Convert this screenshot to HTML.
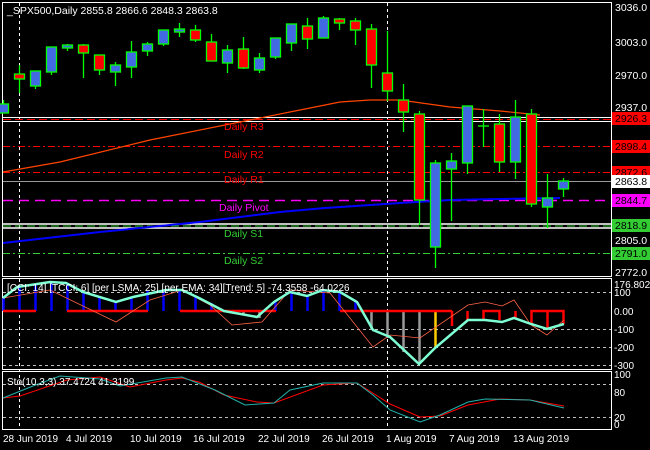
<!DOCTYPE html>
<html><head><style>
body{margin:0;background:#000;}
svg{display:block;font-family:"Liberation Sans",sans-serif;}
</style></head><body>
<svg width="650" height="450" viewBox="0 0 650 450" xmlns="http://www.w3.org/2000/svg">
<rect width="650" height="450" fill="#000"/>
<!-- pane borders -->
<g stroke="#fff" stroke-width="1" fill="none">
<rect x="2.5" y="2.5" width="609" height="274"/>
<rect x="2.5" y="278.5" width="609" height="91"/>
<rect x="2.5" y="371.5" width="609" height="58"/>
</g>
<!-- vertical dashed -->
<g stroke="#fff" stroke-dasharray="3,3">
<line x1="19.5" y1="3" x2="19.5" y2="430"/>
<line x1="387.5" y1="3" x2="387.5" y2="430"/>
</g>
<!-- levels -->
<line x1="3" y1="117.5" x2="611" y2="117.5" stroke="#fff"/>
<line x1="3" y1="121.5" x2="611" y2="121.5" stroke="#fff"/>
<line x1="3" y1="119.5" x2="611" y2="119.5" stroke="#f00" stroke-dasharray="8,4"/>
<line x1="3" y1="146.5" x2="611" y2="146.5" stroke="#f00" stroke-dasharray="7,3,2,3"/>
<line x1="3" y1="172.5" x2="611" y2="172.5" stroke="#f00" stroke-dasharray="7,3,2,3"/>
<line x1="3" y1="181.5" x2="611" y2="181.5" stroke="#999"/>
<line x1="3" y1="200.5" x2="611" y2="200.5" stroke="#f0f" stroke-width="1.5" stroke-dasharray="10,6"/>
<line x1="3" y1="224" x2="611" y2="224" stroke="#fff" stroke-width="1.5"/>
<line x1="3" y1="228" x2="611" y2="228" stroke="#fff" stroke-width="1.5"/>
<line x1="3" y1="226" x2="611" y2="226" stroke="#3c3" stroke-dasharray="8,4"/>
<line x1="3" y1="253.5" x2="611" y2="253.5" stroke="#3c3" stroke-dasharray="7,3,2,3"/>
<!-- MAs -->
<polyline fill="none" stroke="#ff4500" stroke-width="1.2" points="3,172 60,162 150,140 230,124 300,110 340,102 370,100 400,100 450,107 500,111 540,115"/>
<polyline fill="none" stroke="#00f" stroke-width="2" points="3,243 100,232 200,222 280,212 325,208 400,203 450,200 500,199 560,198"/>
<!-- level labels -->
<g font-size="10.5">
<text x="224" y="130" fill="#f00">Daily R3</text>
<text x="224" y="158" fill="#f00">Daily R2</text>
<text x="224" y="183" fill="#f00">Daily R1</text>
<text x="219" y="211" fill="#f0f">Daily Pivot</text>
<text x="224" y="237" fill="#3c3">Daily S1</text>
<text x="224" y="264" fill="#3c3">Daily S2</text>
</g>
<!-- candles -->
<g stroke="#0f0" stroke-width="1.3">
<line x1="3.5" y1="100" x2="3.5" y2="113"/><rect x="-1.5" y="104" width="10" height="9" fill="#4169e1"/>
<line x1="19.5" y1="65" x2="19.5" y2="93"/><rect x="14.5" y="74" width="10" height="5" fill="#f00"/>
<line x1="35.5" y1="71" x2="35.5" y2="89"/><rect x="30.5" y="71" width="10" height="15" fill="#4169e1"/>
<line x1="51.5" y1="47" x2="51.5" y2="75"/><rect x="46.5" y="47" width="10" height="25" fill="#4169e1"/>
<line x1="67.5" y1="44" x2="67.5" y2="51"/><rect x="62.5" y="45" width="10" height="3" fill="#4169e1"/>
<line x1="83.5" y1="44" x2="83.5" y2="78"/><rect x="78.5" y="45" width="10" height="8" fill="#f00"/>
<line x1="99.5" y1="55" x2="99.5" y2="75"/><rect x="94.5" y="55" width="10" height="15" fill="#f00"/>
<line x1="115.5" y1="62" x2="115.5" y2="86"/><rect x="110.5" y="65" width="10" height="7" fill="#4169e1"/>
<line x1="131.5" y1="41" x2="131.5" y2="78"/><rect x="126.5" y="52" width="10" height="15" fill="#4169e1"/>
<line x1="147.5" y1="42" x2="147.5" y2="56"/><rect x="142.5" y="44" width="10" height="7" fill="#4169e1"/>
<line x1="163.5" y1="30" x2="163.5" y2="46"/><rect x="158.5" y="30" width="10" height="14" fill="#4169e1"/>
<line x1="179.5" y1="23" x2="179.5" y2="37"/><rect x="174.5" y="29" width="10" height="3" fill="#4169e1"/>
<line x1="195.5" y1="25" x2="195.5" y2="42"/><rect x="190.5" y="30" width="10" height="10" fill="#f00"/>
<line x1="211.5" y1="34" x2="211.5" y2="61"/><rect x="206.5" y="42" width="10" height="19" fill="#f00"/>
<line x1="227.5" y1="45" x2="227.5" y2="73"/><rect x="222.5" y="50" width="10" height="13" fill="#4169e1"/>
<line x1="243.5" y1="37" x2="243.5" y2="69"/><rect x="238.5" y="49" width="10" height="19" fill="#f00"/>
<line x1="259.5" y1="53" x2="259.5" y2="73"/><rect x="254.5" y="58" width="10" height="12" fill="#4169e1"/>
<line x1="275.5" y1="38" x2="275.5" y2="59"/><rect x="270.5" y="38" width="10" height="19" fill="#4169e1"/>
<line x1="291.5" y1="24" x2="291.5" y2="51"/><rect x="286.5" y="24" width="10" height="19" fill="#4169e1"/>
<line x1="307.5" y1="18" x2="307.5" y2="49"/><rect x="302.5" y="26" width="10" height="13" fill="#f00"/>
<line x1="323.5" y1="16" x2="323.5" y2="38"/><rect x="318.5" y="18" width="10" height="20" fill="#4169e1"/>
<line x1="339.5" y1="18" x2="339.5" y2="30"/><rect x="334.5" y="19" width="10" height="4" fill="#f00"/>
<line x1="355.5" y1="18" x2="355.5" y2="45"/><rect x="350.5" y="21" width="10" height="9" fill="#f00"/>
<line x1="371.5" y1="24" x2="371.5" y2="88"/><rect x="366.5" y="29" width="10" height="36" fill="#f00"/>
<line x1="387.5" y1="31" x2="387.5" y2="101"/><rect x="382.5" y="73" width="10" height="18" fill="#f00"/>
<line x1="403.5" y1="84" x2="403.5" y2="132"/><rect x="398.5" y="100" width="10" height="12" fill="#f00"/>
<line x1="419.5" y1="111" x2="419.5" y2="225"/><rect x="414.5" y="114" width="10" height="86" fill="#f00"/>
<line x1="435.5" y1="160" x2="435.5" y2="268"/><rect x="430.5" y="163" width="10" height="84" fill="#4169e1"/>
<line x1="451.5" y1="153" x2="451.5" y2="221"/><rect x="446.5" y="161" width="10" height="8" fill="#4169e1"/>
<line x1="467.5" y1="106" x2="467.5" y2="174"/><rect x="462.5" y="106" width="10" height="57" fill="#4169e1"/>
<line x1="483.5" y1="109" x2="483.5" y2="147"/><line x1="478" y1="126" x2="489" y2="126"/>
<line x1="499.5" y1="114" x2="499.5" y2="172"/><rect x="494.5" y="124" width="10" height="38" fill="#f00"/>
<line x1="515.5" y1="100" x2="515.5" y2="179"/><rect x="510.5" y="117" width="10" height="45" fill="#4169e1"/>
<line x1="531.5" y1="109" x2="531.5" y2="207"/><rect x="526.5" y="114" width="10" height="90" fill="#f00"/>
<line x1="547.5" y1="174" x2="547.5" y2="228"/><rect x="542.5" y="198" width="10" height="9" fill="#4169e1"/>
<line x1="563.5" y1="178" x2="563.5" y2="197"/><rect x="558.5" y="181" width="10" height="8" fill="#4169e1"/>
</g>
<text x="7" y="14" fill="#fff" font-size="10.5">_SPX500,Daily  2855.8 2866.6 2848.3 2863.8</text>
<!-- price axis -->
<g font-size="10.5" fill="#fff">
<text x="615" y="11">3036.0</text>
<text x="615" y="46">3003.0</text>
<text x="615" y="79">2970.0</text>
<text x="615" y="111">2937.0</text>
<text x="615" y="244">2805.0</text>
<text x="615" y="276">2772.0</text>
</g>
<g font-size="10.5">
<rect x="612" y="112" width="38" height="13" fill="#f00"/><text x="615" y="122" fill="#000">2926.3</text>
<rect x="612" y="140" width="38" height="13" fill="#f00"/><text x="615" y="150" fill="#000">2898.4</text>
<rect x="612" y="166" width="38" height="13" fill="#f00"/><text x="615" y="176" fill="#000">2872.6</text>
<rect x="612" y="175" width="38" height="13" fill="#fff"/><text x="615" y="185" fill="#000">2863.8</text>
<rect x="612" y="194" width="38" height="13" fill="#f0f"/><text x="615" y="204" fill="#000">2844.7</text>
<rect x="612" y="219" width="38" height="13" fill="#3c3"/><text x="615" y="229" fill="#000">2818.9</text>
<rect x="612" y="247" width="38" height="13" fill="#3c3"/><text x="615" y="257" fill="#000">2791.0</text>
</g>
<!-- CCI pane -->
<g stroke="#fff" stroke-dasharray="3,3" stroke-width="0.8">
<line x1="3" y1="292.5" x2="611" y2="292.5"/><line x1="3" y1="329.5" x2="611" y2="329.5"/><line x1="3" y1="347.5" x2="611" y2="347.5"/><line x1="3" y1="365.5" x2="611" y2="365.5"/>
<line x1="3" y1="384.5" x2="611" y2="384.5"/><line x1="3" y1="417.5" x2="611" y2="417.5"/>
</g>
<g stroke="#00f" stroke-width="2.5">
<line x1="3.5" y1="311" x2="3.5" y2="298"/><line x1="19.5" y1="311" x2="19.5" y2="287"/><line x1="35.5" y1="311" x2="35.5" y2="284"/><line x1="51.5" y1="311" x2="51.5" y2="282"/><line x1="67.5" y1="311" x2="67.5" y2="283"/><line x1="83.5" y1="311" x2="83.5" y2="292"/><line x1="99.5" y1="311" x2="99.5" y2="298"/><line x1="115.5" y1="311" x2="115.5" y2="302"/><line x1="131.5" y1="311" x2="131.5" y2="297"/><line x1="147.5" y1="311" x2="147.5" y2="291"/><line x1="163.5" y1="311" x2="163.5" y2="290"/><line x1="179.5" y1="311" x2="179.5" y2="290"/><line x1="195.5" y1="311" x2="195.5" y2="296"/><line x1="211.5" y1="311" x2="211.5" y2="303"/><line x1="275.5" y1="311" x2="275.5" y2="302"/><line x1="291.5" y1="311" x2="291.5" y2="292"/><line x1="307.5" y1="311" x2="307.5" y2="296"/><line x1="323.5" y1="311" x2="323.5" y2="290"/><line x1="339.5" y1="311" x2="339.5" y2="292"/><line x1="355.5" y1="311" x2="355.5" y2="300"/>
</g>
<g stroke="#999" stroke-width="2.5">
<line x1="243.5" y1="311" x2="243.5" y2="315"/><line x1="259.5" y1="311" x2="259.5" y2="318"/>
<line x1="371.5" y1="311" x2="371.5" y2="330"/><line x1="387.5" y1="311" x2="387.5" y2="338"/><line x1="403.5" y1="311" x2="403.5" y2="352"/><line x1="419.5" y1="311" x2="419.5" y2="364"/>
</g>
<line x1="435.5" y1="311" x2="435.5" y2="348" stroke="#fc0" stroke-width="2.5"/>
<g stroke="#f00" stroke-width="2.5" fill="none">
<line x1="3" y1="311" x2="36" y2="311"/><line x1="67" y1="311" x2="148" y2="311"/><line x1="180" y1="311" x2="276" y2="311"/><line x1="340" y1="311" x2="452" y2="311"/>
<line x1="452" y1="311" x2="452" y2="326"/>
<line x1="467.5" y1="311" x2="467.5" y2="320"/>
<polyline points="483.5,320 483.5,311 499.5,311 499.5,320"/>
<line x1="515.5" y1="311" x2="515.5" y2="318"/>
<polyline points="531.5,324 531.5,311 563.5,311 563.5,324"/><line x1="547.5" y1="311" x2="547.5" y2="329"/>
</g>
<polyline fill="none" stroke="#ff6347" stroke-width="0.8" points="3,298 50,290 116,322 150,300 182,290 210,305 232,325 262,322 290,290 330,293 373,347 390,335 420,338 468,305 485,302 502,306 514,300 531,325 547,335 564,320"/>
<polyline fill="none" stroke="#7fffd4" stroke-width="2.5" points="3,298 17,287 50,282 66,283 83,292 116,302 133,297 166,290 182,290 199,298 224,311 257,317 274,302 290,292 307,296 323,290 340,292 357,302 373,330 390,337 419,364 435,348 468,320 485,320 502,322 514,318 531,324 547,329 564,324"/>
<text x="7" y="291" fill="#fff" font-size="10">[CCI: 14] [TCCI: 6] [per LSMA: 25] [per EMA: 34][Trend: 5]  -74.3558 -64.0226</text>
<g font-size="10" fill="#fff">
<text x="614" y="288">176.8025</text>
<text x="614" y="296">100</text>
<text x="614" y="333">-100</text>
<text x="614" y="351">-200</text>
<text x="614" y="369">-300</text>
<text x="614" y="315">0.00</text>
<text x="614" y="396">80</text>
<text x="614" y="378">100</text>
<text x="614" y="421">20</text>
<text x="614" y="428">0</text>
</g>
<!-- Sto -->
<polyline fill="none" stroke="#f00" stroke-width="1" points="3,398 20,396 67,380 100,377 130,387 166,380 182,378 199,382 224,395 257,402 274,403 323,385 357,383 390,404 420,417 440,416 468,405 500,399 530,400 564,406"/>
<polyline fill="none" stroke="#20b2aa" stroke-width="1" points="3,398 33,386 60,376 100,379 120,386 166,378 182,377 215,390 245,405 274,403 290,390 323,383 357,383 373,395 390,410 420,422 440,415 468,402 485,399 530,400 564,408"/>
<text x="7" y="385" fill="#fff" font-size="10">Sto(10,3,3) 37.4724 41.3199</text>
<!-- dates -->
<g font-size="10" fill="#fff">
<text x="3" y="442">28 Jun 2019</text>
<text x="66" y="442">4 Jul 2019</text>
<text x="130" y="442">10 Jul 2019</text>
<text x="193" y="442">16 Jul 2019</text>
<text x="258" y="442">22 Jul 2019</text>
<text x="322" y="442">26 Jul 2019</text>
<text x="386" y="442">1 Aug 2019</text>
<text x="449" y="442">7 Aug 2019</text>
<text x="513" y="442">13 Aug 2019</text>
</g>
</svg>
</body></html>
